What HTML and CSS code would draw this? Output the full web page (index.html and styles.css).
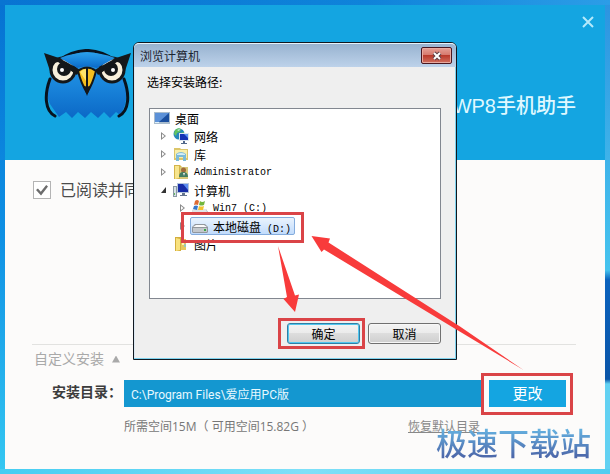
FILE: index.html
```html
<!DOCTYPE html>
<html lang="zh-CN">
<head>
  <meta charset="UTF-8">
  <meta name="viewport" content="width=device-width, initial-scale=1.0">
  <title>WP8手机助手</title>
  <link rel="stylesheet" href="styles.css">
</head>
<body>
  <div class="desktop">
    <main class="installer">
      <header class="banner">
        <svg class="owl" viewBox="0 0 88 72" aria-hidden="true">
          <defs>
            <linearGradient id="owlBody" x1="0" y1="0" x2="0" y2="1">
              <stop offset="0" stop-color="#2a9fe9"/>
              <stop offset="0.500" stop-color="#1a86dc"/>
              <stop offset="1" stop-color="#0b68c6"/>
            </linearGradient>
          </defs>
          <path fill="url(#owlBody)" d="M14 11Q43-7 72 11L80 30Q86 52 76 66L72 63 66 69 60 63 54 69 47 63 41 69 34 63 28 69 22 63 15 68 8 58Q0 48 6 29z"/>
          <path fill="none" stroke="#08121e" stroke-width="3" stroke-linecap="round" d="M14 12Q43-9 72 12M6 30C0 46 1 62 11 67M80 30c6 16 5 32-5 37"/>
          <circle cx="19" cy="21" r="12" fill="#f8f0dc" stroke="#14171a" stroke-width="3"/>
          <circle cx="68" cy="21" r="12" fill="#f8f0dc" stroke="#14171a" stroke-width="3"/>
          <circle cx="20" cy="20" r="7" fill="#14171a"/>
          <circle cx="67" cy="20" r="7" fill="#14171a"/>
          <circle cx="18" cy="21" r="2" fill="#fff"/>
          <circle cx="69" cy="21" r="2" fill="#fff"/>
          <path fill="url(#owlBody)" d="M16 9Q43 -2 71 9L53 19 43 17 33 19z"/>
          <path fill="#14171a" d="M0 4L15 9 33 19 36 21 33 26 14 13 10 14 6 22zM87 4L72 9 54 19 51 21 54 26 73 13 77 14 81 22z"/>
          <path fill="#f6bf1e" stroke="#14171a" stroke-width="2" stroke-linejoin="round" d="M34 22q9-7 18 0-3 12-9 22-6-10-9-22z"/>
          <path fill="#ffe36a" d="M36 23q3-3 6-3v12z"/>
          <path fill="#14171a" d="M42 19h2v20h-2zM39 36q4 3 8 0l-4 11z"/>
        </svg>
        <button class="banner-close" type="button" aria-label="关闭">
          <svg viewBox="0 0 12 12"><path d="M1 1l10 10M11 1L1 11"/></svg>
        </button>
        <h1 class="product">WP8手机助手</h1>
      </header>

      <form class="setup">
        <div class="agree">
          <input type="checkbox" id="agree" checked>
          <label for="agree">已阅读并同意</label>
        </div>
        <div class="custom">
          <button class="custom-toggle" type="button">自定义安装<span class="triangle"></span></button>
          <div class="path-row">
            <label for="path">安装目录：</label>
            <input type="text" id="path" value="C:\Program Files\爱应用PC版">
            <button class="change" type="button">更改</button>
          </div>
          <div class="path-info">
            <span>所需空间15M（ 可用空间15.82G ）</span>
            <a href="#">恢复默认目录</a>
          </div>
        </div>
      </form>
    </main>

    <section class="dialog" role="dialog" aria-labelledby="dialogTitle">
      <div class="titlebar">
        <h2 id="dialogTitle">浏览计算机</h2>
        <button class="dialog-close" type="button" aria-label="关闭">
          <svg viewBox="0 0 12 10"><path class="edge" d="M3 2l6 6M9 2L3 8"/><path class="cross" d="M3 2l6 6M9 2L3 8"/></svg>
        </button>
      </div>
      <div class="dialog-body">
        <p class="prompt">选择安装路径:</p>
        <ul class="tree">
          <li class="node root">
            <svg class="icon" viewBox="0 0 16 16"><path fill="#a9bccd" d="M0 2h16v12H0z"/><path fill="#1b4f9f" d="M1 3h14v9H1z"/><path fill="#5c91d8" d="M1 3h14L5 12H1z"/><path fill="#dff1fa" d="M1 12h4v1H1z"/></svg>
            <span>桌面</span>
          </li>
          <li class="node">
            <span class="twisty"></span>
            <svg class="icon" viewBox="0 0 16 16"><circle cx="6" cy="6" r="5.5" fill="#2587bc"/><path fill="#62c360" d="M2 2q3-3 6-1L7 4 4 5 3 8 1 6zM7 5l4-1v4l-3 3z"/><path fill="#c9edf8" d="M4 2l3-1-1 2z"/><path fill="#dce5f0" d="M6 5h10v8H6z"/><path fill="#1532b5" d="M7 6h8v6H7z"/><path fill="#5c91ef" d="M11 6h4v4z"/><path fill="#52688b" d="M10 13h2v2h2v1H8v-1h2z"/></svg>
            <span>网络</span>
          </li>
          <li class="node">
            <span class="twisty"></span>
            <svg class="icon" viewBox="0 0 16 16"><path fill="#dcc66a" d="M1 2h6l1 1h7v11H1z"/><path fill="#f9efaa" d="M2 4h12v8H2z"/><path fill="#7dbbd8" d="M3 8q5-4 10 0v7h-3v-4H6v4H3z"/><path fill="#d5eef5" d="M4 8q4-2 8 0v1H4z"/></svg>
            <span>库</span>
          </li>
          <li class="node">
            <span class="twisty"></span>
            <svg class="icon" viewBox="0 0 16 16"><path fill="#d4b44b" d="M1 1h6l2 2v12H1z"/><path fill="#f7e58d" d="M2 2h4v12l-4 1z"/><path fill="#d6c777" d="M7 3h8v12H7z"/><circle cx="10.500" cy="6" r="2.500" fill="#a16b3c"/><path fill="#427d62" d="M6 13q0-5 4-5 5 0 5 5z"/><path fill="#eee" d="M10 9h2l-1 3z"/></svg>
            <span class="latin">Administrator</span>
          </li>
          <li class="node">
            <span class="twisty open"></span>
            <svg class="icon" viewBox="0 0 16 16"><path fill="#8b98a4" d="M0 4h4v11H0z"/><path fill="#d6e1e6" d="M1 5h2v9H1z"/><path fill="#67b967" d="M1 11h1v2H1z"/><path fill="#b5c5db" d="M4 1h12v10H4z"/><path fill="#172ca7" d="M5 2h10v8H5z"/><path fill="#5d8df0" d="M10 2h5v6z"/><path fill="#65758e" d="M9 11h3v2h2v1H7v-1h2z"/></svg>
            <span>计算机</span>
          </li>
          <li class="node child">
            <span class="twisty"></span>
            <svg class="icon" viewBox="0 0 16 16"><path fill="#a9afb8" d="M1 9h13l2 3v3H0v-3z"/><path fill="#e1e4e7" d="M1 9h13l1 3H0z"/><path fill="#de6b32" d="M3 1q2-2 4 0L6 5Q4 4 2 5z"/><path fill="#73b63d" d="M8 1q2 2 5 0l-1 4q-3 1-5 0z"/><path fill="#3778cb" d="M2 6q2-1 4 0l-1 4-4-1z"/><path fill="#f1c22f" d="M7 6q2 1 5 0l-1 4H6z"/></svg>
            <span class="latin">Win7 (C:)</span>
          </li>
          <li class="node child">
            <span class="twisty"></span>
            <span class="picked">
              <svg class="icon" viewBox="0 0 16 16"><path fill="#92979d" d="M0 9l3-3h10l3 3v5l-1 1H1l-1-1z"/><path fill="#fafafa" d="M1 9l3-2h8l3 2z"/><path fill="#c3c8cd" d="M1 10h14v4H1z"/><path fill="#3aa64a" d="M12 11h2v2h-2z"/></svg>
              <span>本地磁盘<span class="latin"> (D:)</span></span>
            </span>
          </li>
          <li class="node">
            <span class="twisty none"></span>
            <svg class="icon" viewBox="0 0 16 16"><path fill="#d3ae3e" d="M2 1h6v14H2z"/><path fill="#f9e27e" d="M3 2l4 1v11l-4 1z"/><path fill="#e5c85d" d="M8 3h5v11H8z"/><path fill="#fff2b2" d="M9 4h2v5H9z"/><path fill="#9ac6b3" d="M11 8h2v3h-2z"/></svg>
            <span>图片</span>
          </li>
        </ul>
        <div class="actions">
          <button class="btn default" type="button">确定</button>
          <button class="btn" type="button">取消</button>
        </div>
      </div>
    </section>

    <!-- step markers -->
    <svg class="marks" width="610" height="474" viewBox="0 0 610 474" aria-hidden="true">
      <g fill="none" stroke="#da4447" stroke-width="3">
        <rect x="182.500" y="213.500" width="120" height="28"/>
        <rect x="279.500" y="319.500" width="84" height="28"/>
        <rect x="482.500" y="374.500" width="89" height="39"/>
      </g>
      <g fill="#f83b3b">
        <path d="M278 246L295 295.500 299 294.500 295 312 283.500 299 287 297z"/>
        <path d="M311.500 236L330 238.500 328.500 242.500 460 326.500 523.500 370 458 330.500 324 249.500 321.500 252z"/>
      </g>
    </svg>
    <div class="watermark">极速下载站</div>
  </div>
</body>
</html>
```

FILE: styles.css
```css
* {
  box-sizing: border-box;
}
body {
  margin: 0;
  font-family: "Open Sans", "Noto Sans CJK SC", sans-serif;
  font-size: 12px;
}
button, input {
  font-family: inherit;
  margin: 0;
}
h1, h2, p, ul {
  margin: 0;
  padding: 0;
}
.desktop {
  position: relative;
  display: flex;
  min-height: 100vh;
  padding: 5px;
  overflow: hidden;
  background:
    linear-gradient(90deg, #0874d2, #0f83da 60%, #2c9de7) top / 100% 5px no-repeat,
    linear-gradient(90deg, #45cdf2, #7fe0f8 50%, #52cdf0) bottom / 100% 5px no-repeat,
    linear-gradient(#2c93e0, #3fb4ea 35%, #45c3ee 57%, #0b62bd 59%, #0a55a8 80%, #62d1f2 81%) right / 5px 100% no-repeat,
    linear-gradient(#0672d2, #0e90e4 50%, #35c8f2);
}
.installer {
  flex: 1;
  display: flex;
  flex-direction: column;
  background: #fcfbfa;
}

/* banner */
.banner {
  display: grid;
  grid-template-columns: 1fr auto;
  grid-template-rows: auto 1fr;
  height: 155px;
  padding: 11px 11px 0 39px;
  background: #14a5e1;
}
.owl {
  grid-row: 1 / 3;
  width: 88px;
  height: 72px;
  margin-top: 33px;
}
.banner-close {
  justify-self: end;
  width: 12px;
  height: 12px;
  padding: 0;
  border: none;
  background: none;
}
.banner-close svg {
  display: block;
  fill: none;
  stroke: #b5e9fb;
  stroke-width: 2;
}
.product {
  margin: 63px 18px 0 0;
  font-family: "Liberation Sans", "Noto Sans CJK SC", sans-serif;
  font-size: 20px;
  font-weight: 500;
  line-height: 30px;
  color: #dff8ff;
}

/* options */
.setup {
  flex: 1;
  display: flex;
  flex-direction: column;
  justify-content: space-between;
  padding: 18px 29px 33px 27px;
}
.agree {
  display: flex;
  align-items: center;
  gap: 9px;
  padding-left: 1px;
  font-size: 16px;
  line-height: 24px;
  color: #4b4b4b;
}
.agree input {
  appearance: none;
  display: flex;
  width: 18px;
  height: 18px;
  border: 1px solid #b4b4b4;
  background: #fff;
}
.agree input:checked::before {
  content: "";
  flex: 1;
  margin: 2px;
  background: #6d6d6d;
  clip-path: polygon(0 50%, 16% 38%, 40% 65%, 85% 8%, 100% 20%, 42% 96%);
}
.custom {
  border-top: 1px solid #e2e2e0;
}
.custom-toggle {
  display: flex;
  align-items: center;
  gap: 8px;
  margin-top: 3px;
  padding: 0 2px;
  border: none;
  background: none;
  font-size: 14px;
  line-height: 22px;
  color: #a9a9a9;
}
.triangle {
  width: 8px;
  height: 7px;
  background: #a9a9a9;
  clip-path: polygon(50% 0, 100% 100%, 0 100%);
}
.path-row {
  display: flex;
  align-items: center;
  margin-top: 10px;
  padding: 0 10px 0 20px;
}
.path-row label {
  width: 72px;
  font-size: 14px;
  font-weight: bold;
  line-height: 20px;
  padding-bottom: 4px;
  white-space: nowrap;
  color: #3c3c3c;
}
.path-row input {
  flex: 1;
  min-width: 0;
  height: 27px;
  margin-right: 6px;
  padding: 0 7px;
  border: none;
  background: #1497d0;
  font-family: Roboto, "Noto Sans CJK SC", sans-serif;
  font-size: 12px;
  color: #e8f9ff;
}
.change {
  width: 77px;
  height: 27px;
  padding: 0;
  border: none;
  background: #14a5e1;
  font-size: 15px;
  line-height: 27px;
  color: #fff;
}
.path-info {
  display: flex;
  justify-content: space-between;
  margin-top: 11px;
  padding: 0 96px 0 92px;
  line-height: 18px;
  color: #777;
}
.path-info a {
  color: #888;
}

/* browse dialog */
.dialog {
  position: absolute;
  left: 133px;
  top: 42px;
  width: 324px;
  border: 1px solid #101820;
  border-radius: 6px 6px 0 0;
  background: #efefef;
  box-shadow: inset -1px -1px #7fd3ee, inset 1px 0 #dce8f2;
  font-family: "Noto Sans CJK SC", sans-serif;
  color: #000;
}
.titlebar {
  display: flex;
  justify-content: space-between;
  align-items: center;
  height: 24px;
  padding: 0 4px 0 6px;
  border-top: 1px solid #e6f3fb;
  border-radius: 5px 5px 0 0;
  background: linear-gradient(#98b3d0, #bdd2ea);
}
.titlebar h2 {
  font-size: 12px;
  font-weight: normal;
  color: #1c2530;
}
.dialog-close {
  display: flex;
  justify-content: center;
  align-items: center;
  width: 31px;
  height: 17px;
  padding: 0;
  border: 1px solid #4a1720;
  border-radius: 2px;
  background: linear-gradient(#e5a096, #d5786c 48%, #b93a2c 50%, #d2705f);
  box-shadow: inset 0 0 0 1px #e8aaa0;
}
.dialog-close svg {
  width: 12px;
  height: 10px;
  fill: none;
}
.edge {
  stroke: #5c3f45;
  stroke-width: 4;
}
.cross {
  stroke: #fff;
  stroke-width: 2;
}
.dialog-body {
  padding: 7px 13px 15px;
}
.prompt {
  line-height: 16px;
}
.tree {
  min-height: 191px;
  margin: 18px 2px 0;
  padding: 0 4px;
  border: 1px solid #828790;
  background: #fff;
  list-style: none;
}
.node {
  display: flex;
  align-items: center;
  height: 18px;
  padding-left: 7px;
  white-space: nowrap;
}
.node.root {
  padding-left: 0;
}
.node.child {
  padding-left: 26px;
}
.icon {
  width: 16px;
  height: 16px;
  margin-right: 5px;
}
.twisty {
  width: 5px;
  height: 8px;
  margin-right: 7px;
  background: #8a8a8a;
  clip-path: polygon(evenodd, 0 0, 100% 50%, 0 100%, 0 0, 20% 25%, 20% 75%, 70% 50%, 20% 25%);
}
.twisty.open {
  height: 6px;
  background: #333;
  clip-path: polygon(100% 0, 100% 100%, 0 100%);
}
.twisty.none {
  background: none;
}
.latin {
  font-family: "Liberation Mono", monospace;
  font-size: 10px;
}
.picked {
  display: flex;
  align-items: center;
  height: 18px;
  margin-left: -2px;
  padding: 0 3px 0 1px;
  border: 1px solid #84acdd;
  border-radius: 2px;
  background: linear-gradient(#eaf3fd, #c1dbfc);
}
.actions {
  display: flex;
  justify-content: flex-end;
  gap: 8px;
  margin: 24px 2px 0;
}
.btn {
  width: 73px;
  height: 21px;
  padding: 0;
  border: 1px solid #707070;
  border-radius: 3px;
  background: linear-gradient(#f3f3f3, #ebebeb 48%, #dddddd 50%, #cfcfcf);
  box-shadow: inset 0 0 0 1px #f7f7f7;
  font-size: 12px;
  line-height: 18px;
  color: #000;
}
.btn.default {
  border-color: #2f7fa6;
  box-shadow: inset 0 0 0 1px #52c6ee;
}

.marks {
  position: absolute;
  left: 0;
  top: 0;
  pointer-events: none;
}
.watermark {
  position: absolute;
  right: 19px;
  bottom: 12px;
  font-family: "Noto Sans CJK SC", sans-serif;
  font-size: 31px;
  font-weight: 500;
  line-height: 40px;
  color: transparent;
  background: linear-gradient(#66b4e2 15%, #4d69ab 85%);
  -webkit-background-clip: text;
  background-clip: text;
}
```
